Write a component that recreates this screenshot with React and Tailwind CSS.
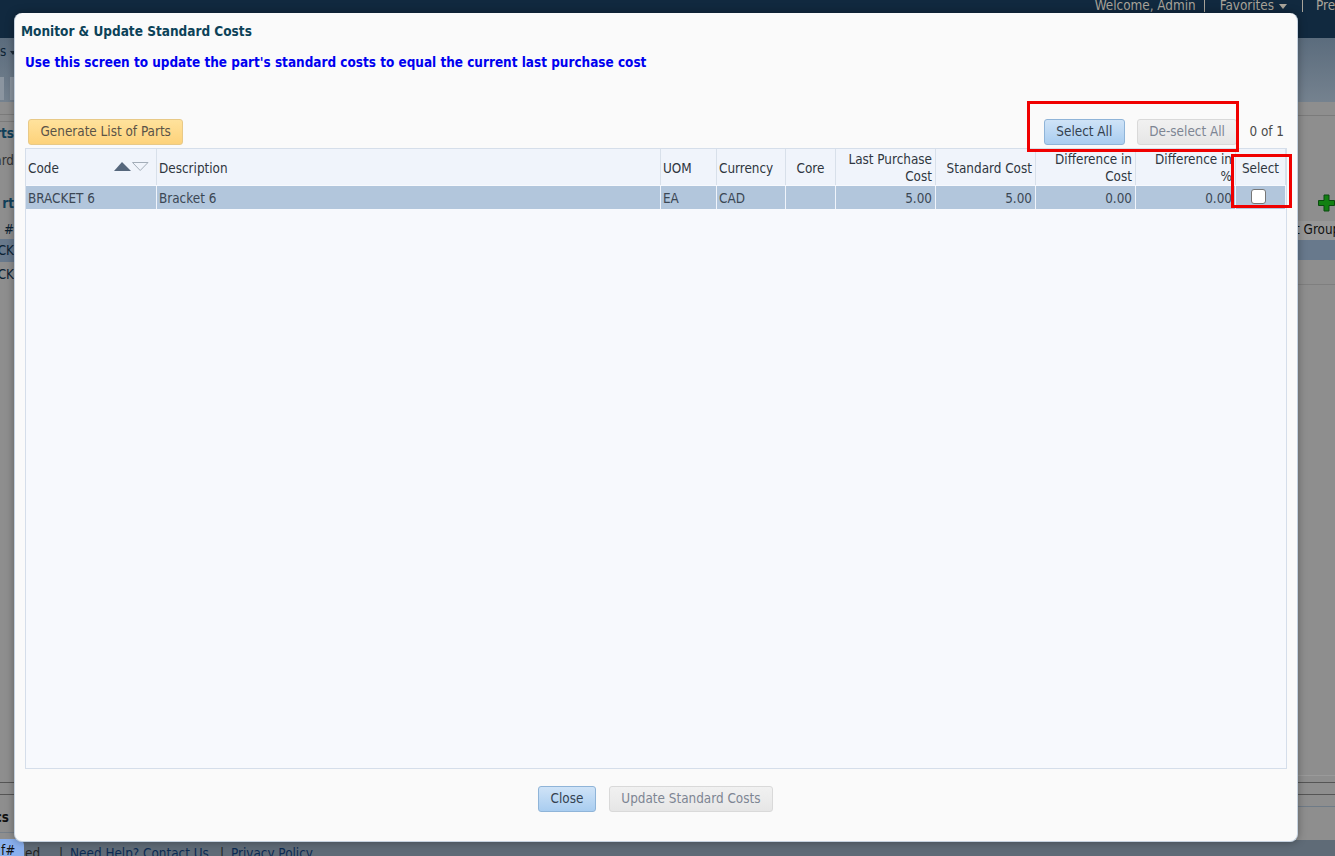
const font = "font-['DejaVu_Sans',sans-serif] font-stretch-condensed";

const cols = "grid grid-cols-[130px_503px_55px_68px_49px_99px_99px_99px_99px_49px] gap-x-px";

const headers = [
  { label: "Code" },
  { label: "Description" },
  { label: "UOM" },
  { label: "Currency" },
  { label: "Core", center: true },
  { label: "Last Purchase Cost", right: true },
  { label: "Standard Cost", right: true },
  { label: "Difference in Cost", right: true },
  { label: "Difference in %", right: true },
  { label: "Select", center: true },
];

const row = ["BRACKET 6", "Bracket 6", "EA", "CAD", "", "5.00", "5.00", "0.00", "0.00"];

const Background = () => (
  <div className="flex flex-col h-[856px] w-[1335px] overflow-hidden bg-[#8e8e8e]">
    <div className="h-[38px] shrink-0 bg-[#11293f] flex justify-end items-start text-[13.4px] leading-[11px] text-[#a9a49a] whitespace-nowrap">
      <span className="mr-[8px]">Welcome, Admin</span>
      <span className="w-px h-[12px] bg-[#a9a49a] mr-[15px]" />
      <span className="mr-[5px]">Favorites</span>
      <span className="mt-[4px] mr-[15px] border-x-[4px] border-x-transparent border-t-[5px] border-t-[#a9a49a]" />
      <span className="w-px h-[12px] bg-[#a9a49a] mr-[13px]" />
      <span className="w-[19px] overflow-hidden">Preferences</span>
    </div>
    <div className="h-[64px] shrink-0 bg-gradient-to-b from-[#5b6c7d] to-[#75828f] flex flex-col text-[13.4px] text-[#0c2233]">
      <div className="mt-[6px] h-[17px] flex items-center gap-[4px]">
        <span>s</span>
        <span className="border-x-[3px] border-x-transparent border-t-[4px] border-t-[#1c2a38]" />
      </div>
      <div className="mt-[16px] h-[23px] w-[14px] flex justify-between">
        <span className="w-[4px] bg-[#8b95a0]" />
        <span className="w-[4px] bg-[#8b95a0]" />
      </div>
    </div>
    <div className="flex-1 flex justify-between">
      <div className="w-[14px] overflow-hidden flex flex-col text-[13.4px] leading-[18px] whitespace-nowrap text-[#0c2233]">
        <div className="mt-[6px] h-[7px] border-b border-[#7b7b7b]" />
        <div className="h-[7px] border-b border-[#7b7b7b]" />
        <div className="flex justify-end mt-[3px] font-bold text-[#10405a]">rts</div>
        <div className="flex justify-end mt-[9px] text-[#333]">ard</div>
        <div className="flex justify-end mt-[25px] font-bold text-[#10405a]">rt</div>
        <div className="h-[26px] pt-[8px] flex justify-end">#</div>
        <div className="h-[23px] bg-[#68798c] flex items-center justify-end">ACK</div>
        <div className="h-[26px] flex items-center justify-end">ACK</div>
        <div className="mt-auto h-[12px] border-t border-[#555]" />
        <div className="h-[38px] border-t border-[#555] flex justify-end pt-[14px] pr-[5px] font-bold text-[#111]">cs</div>
        <div className="h-[8px] border-t border-[#777f88]" />
      </div>
      <div className="w-[37px] flex flex-col text-[13.4px] leading-[18px] text-[#111] whitespace-nowrap">
        <div className="h-[14px] border-b border-[#7b7b7b]" />
        <div className="mt-[73px] h-[28px] flex items-center pl-[20px]">
          <svg width="17" height="18" viewBox="0 0 17 18">
            <path d="M6 1 H11 V6.5 H16.5 V11.5 H11 V17 H6 V11.5 H0.5 V6.5 H6 Z" fill="#128012" stroke="#0a4a10" strokeWidth="1" />
          </svg>
        </div>
        <div className="mt-[4px] h-[19px] bg-[#989898] overflow-hidden">
          <span className="block -ml-[3px]">t Group</span>
        </div>
        <div className="h-[20px] bg-[#68798c]" />
        <div className="h-[25px] border-b border-[#7f7f7f]" />
        <div className="mt-auto h-[7px] border-t border-[#9a9a9a]" />
        <div className="h-[12px] border-t border-[#555]" />
        <div className="h-[12px] border-t border-[#555]" />
        <div className="h-[34px] border-t border-[#6f7b87]" />
      </div>
    </div>
    <div className="h-[16px] shrink-0 bg-[#5f6b77] flex items-start pt-[6px] text-[13.4px] leading-[16px] text-[#0b2a52] whitespace-nowrap relative">
      <span className="ml-[25px] w-[34px] text-[#222]">ed</span>
      <span className="mr-[7px] text-[#222]">|</span>
      <span className="mr-[11px]">Need Help? Contact Us</span>
      <span className="mr-[7px] text-[#222]">|</span>
      <span>Privacy Policy</span>
      <span className="absolute left-0 top-[-1px] w-[24px] h-[17px] bg-[#8ab0ee] rounded-tr-[6px] text-[#111] pl-[1px] pt-[4px]">f#</span>
    </div>
  </div>
);

const Button = ({ variant, className = "", children }) => {
  const styles = {
    yellow: "bg-gradient-to-b from-[#ffe29c] to-[#fdd27a] border-[#e8c987] text-[#5a5347]",
    blue: "bg-gradient-to-b from-[#cfe3f7] to-[#a9cdf0] border-[#8fb4d8] text-[#33414f]",
    disabled: "bg-gradient-to-b from-[#f1f1f1] to-[#e6e6e6] border-[#d9d9d9] text-[#7d8593]",
  };
  return (
    <button type="button" className={`h-[26px] px-[11.5px] border rounded-[3px] text-[13.4px] leading-none whitespace-nowrap ${styles[variant]} ${className}`}>
      {children}
    </button>
  );
};

const Dialog = () => (
  <div className="absolute left-[14px] top-[13px] w-[1284px] h-[829px] bg-[#fafafa] rounded-[8px] border-l border-r border-b border-[#c5d2e0] shadow-[0_0_8px_rgba(0,0,0,0.35)] flex flex-col">
    <h1 className="ml-[6px] mt-[9px] text-[13.5px] leading-[18px] font-bold text-[#0c4258]">Monitor &amp; Update Standard Costs</h1>
    <p className="ml-[10px] mt-[14px] text-[13.45px] leading-[18px] font-bold text-[#0000f0]">
      Use this screen to update the part's standard costs to equal the current last purchase cost
    </p>
    <div className="ml-[13px] mr-[11px] mt-[47px] flex items-center">
      <Button variant="yellow">Generate List of Parts</Button>
      <Button variant="blue" className="ml-auto">Select All</Button>
      <Button variant="disabled" className="ml-[12px]">De-select All</Button>
      <span className="ml-[12px] mr-[2px] text-[13.4px] text-[#4a4a4a]">0 of 1</span>
    </div>
    <div className="ml-[10px] mr-[10px] mt-[3px] h-[621px] border border-[#d5deea] bg-[#f7f9fd] text-[13.4px] text-[#3b4754]">
      <div className={`${cols} h-[36px] bg-[#d8e0ea]`}>
        {headers.map((h) => (
          <div key={h.label} className={`relative bg-[#f0f4fb] flex items-center pt-[2px] pl-[2px] ${h.right ? "pr-[3px] justify-end text-right" : "pr-[2px]"} text-[#2f3640] leading-[17px] ${h.center ? "justify-center text-center" : ""}`}>
            <span className={h.right ? "pl-[6px]" : ""}>{h.label}</span>
            {h.label === "Code" && (
              <svg width="36" height="12" viewBox="0 0 36 12" className="absolute left-[88px] top-[12px]">
                <path d="M0 10 L8 1 L17 10 Z" fill="#56677c" />
                <path d="M18.5 1.5 H34 L26.2 9.5 Z" fill="none" stroke="#a3adb8" strokeWidth="1" />
              </svg>
            )}
          </div>
        ))}
      </div>
      <div className={`${cols} h-[23px] mt-px bg-[#f0f4fb]`}>
        {row.map((v, i) => (
          <div key={i} className={`bg-[#b2c6dc] flex items-center pt-[3px] pl-[2px] ${i > 4 ? "pr-[3px] justify-end" : "pr-[2px]"}`}>{v}</div>
        ))}
        <div className="bg-[#b2c6dc] flex items-center justify-center pr-[4px] pb-[2px]">
          <span className="w-[15px] h-[15px] bg-white border border-[#767676] rounded-[3px]" />
        </div>
      </div>
    </div>
    <div className="mt-[17px] flex justify-center gap-[13px] pr-[1px]">
      <Button variant="blue">Close</Button>
      <Button variant="disabled">Update Standard Costs</Button>
    </div>
    <div className="absolute left-[1012px] top-[88px] w-[212px] h-[51px] border-[3px] border-[#f00000]" />
    <div className="absolute left-[1216px] top-[141px] w-[61px] h-[54px] border-[3px] border-[#f00000]" />
  </div>
);

export default function App() {
  return (
    <div className={`relative w-[1335px] h-[856px] overflow-hidden ${font}`}>
      <Background />
      <Dialog />
    </div>
  );
}
